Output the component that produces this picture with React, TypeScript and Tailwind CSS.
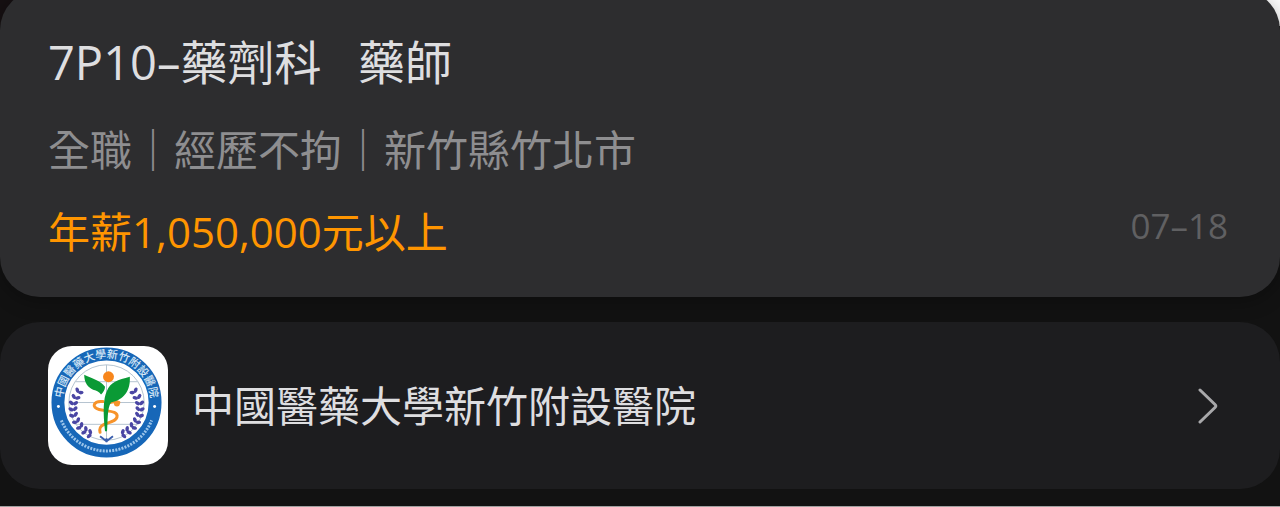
import clsx from 'clsx';

interface Job {
  title: string;
  tags: string[];
  salary: string;
  date: string;
  company: string;
}

const job: Job = {
  title: '7P10–藥劑科\u00a0\u00a0\u00a0藥師',
  tags: ['全職', '經歷不拘', '新竹縣竹北市'],
  salary: '年薪1,050,000元以上',
  date: '07–18',
  company: '中國醫藥大學新竹附設醫院',
};

// leaf pairs of the left laurel branch, mirrored for the right one
const laurel = [
  { x: 30, y: 47, r: 35 },
  { x: 27, y: 53, r: 20 },
  { x: 25, y: 59, r: 5 },
  { x: 25, y: 65, r: -8 },
  { x: 26, y: 71, r: -20 },
  { x: 29, y: 77, r: -35 },
  { x: 33, y: 82, r: -48 },
  { x: 38, y: 86, r: -62 },
  { x: 43, y: 89, r: -75 },
];

function LaurelBranch({ mirrored = false }: { mirrored?: boolean }) {
  return (
    <g transform={mirrored ? 'translate(117 0) scale(-1 1)' : undefined}>
      {laurel.map((leaf) => (
        <g
          key={leaf.y}
          transform={`translate(${leaf.x} ${leaf.y}) rotate(${leaf.r})`}
          fill="#4a46a4"
        >
          <ellipse cx="-2.6" cy="0" rx="2.8" ry="1.8" transform="rotate(35)" />
          <ellipse cx="2.6" cy="0" rx="2.8" ry="1.8" transform="rotate(-35)" />
        </g>
      ))}
    </g>
  );
}

function HospitalLogo({ className }: { className?: string }) {
  return (
    <svg
      viewBox="0 0 120 120"
      aria-hidden="true"
      className={clsx('shrink-0 rounded-3xl bg-white', className)}
    >
      <defs>
        <path id="ring-top" d="M15 66A44.500 44.500 0 1 1 102 66" />
      </defs>
      {/* Ring */}
      <circle cx="58.500" cy="57" r="49" fill="none" stroke="#1767b8" strokeWidth="13" />
      <text
        fill="#d8e8f6"
        fontSize="11"
        fontWeight="500"
        fontFamily="'Noto Sans CJK TC', sans-serif"
      >
        <textPath href="#ring-top" startOffset="50%" textAnchor="middle">
          中國醫藥大學新竹附設醫院
        </textPath>
      </text>
      <path
        d="M13 75A49 49 0 0 0 104 75"
        fill="none"
        stroke="#9cc5ea"
        strokeWidth="3"
        strokeDasharray="2 1.200"
      />
      <circle cx="10" cy="61" r="1.500" fill="#fff" />
      <circle cx="107" cy="61" r="1.500" fill="#fff" />
      {/* Globe */}
      <g fill="none" stroke="#b4c3cf" strokeWidth="1">
        <circle cx="58.500" cy="57" r="38" />
        <path d="M58.500 19v76M20.500 57h76M27 36h63M27 79h63" />
      </g>
      <LaurelBranch />
      <LaurelBranch mirrored />
      <path d="M52 91l6.500 5 6.500-5M58.500 93v4" fill="none" stroke="#3a5fae" strokeWidth="2" />
      {/* Snake */}
      <path
        d="M71 57c-3-1-6-1-9 0M55 56c-10-1-12 6-4 8 8 2 20 1 18 8-2 5-9 5-13 7-4 2-5 4-4 8"
        fill="none"
        stroke="#f7932a"
        strokeWidth="3"
        strokeLinecap="round"
      />
      <circle cx="69" cy="58" r="3" fill="#f7932a" />
      {/* Leaves and stem */}
      <circle cx="60.500" cy="31" r="5.500" fill="#f7861c" />
      <path
        d="M36 29c0 8 4 13 9 15 4 1 6 2 8 5 2-2 4-5 4-8-5-6-12-8-21-12z"
        fill="#0a9a35"
      />
      <path
        d="M82 31c-12 3-20 6-23 14-4 8-4 22-2 41h2c1-10 0-23 4-29 9-2 20-8 19-26z"
        fill="#0a9a35"
      />
    </svg>
  );
}

function ChevronIcon({ className }: { className?: string }) {
  return (
    <svg viewBox="0 0 20 36" aria-hidden="true" className={className}>
      <path
        d="M2 2L17 16.500Q18.500 18 17 19.500L2 34"
        fill="none"
        stroke="currentColor"
        strokeWidth="3"
        strokeLinecap="round"
      />
    </svg>
  );
}

export default function App() {
  return (
    <main className="overflow-hidden border-b border-[#a0a0a0] bg-[#121212] pb-[17px] font-['Open_Sans','Noto_Sans_CJK_TC',sans-serif] text-[#dedee0]">
      {/* Job card */}
      <div className="bg-[linear-gradient(90deg,#161012_50%,#fff_50%)] bg-[length:100%_36px] bg-no-repeat">
        <article className="-mt-[10px] rounded-[40px] bg-[#2d2d2f] px-12 pt-10 pb-[33px] shadow-[0_4px_20px_rgba(0,0,0,0.3)]">
          <h1 className="text-[47px] leading-[64px]">{job.title}</h1>
          <p className="mt-6 text-[42px] leading-[64px] text-[#8e8e90]">
            {job.tags.join('｜')}
          </p>
          <div className="mt-[18px] flex items-center justify-between">
            <p className="text-[42px] leading-[64px] text-[#ff9500]">
              {job.salary}
            </p>
            <time className="pr-1 pb-3 text-[35px] leading-[48px] text-[#606062]">
              {job.date}
            </time>
          </div>
        </article>
      </div>

      {/* Company card */}
      <a
        href="#company"
        className="mt-[25px] flex items-center rounded-[40px] bg-[#1d1d1f] px-12 py-6"
      >
        <HospitalLogo className="h-[119px] w-[120px]" />
        <span className="ml-6 text-[42px] leading-[64px]">{job.company}</span>
        <ChevronIcon className="mr-[14px] ml-auto h-9 w-5 text-[#a8a8aa]" />
      </a>
    </main>
  );
}
